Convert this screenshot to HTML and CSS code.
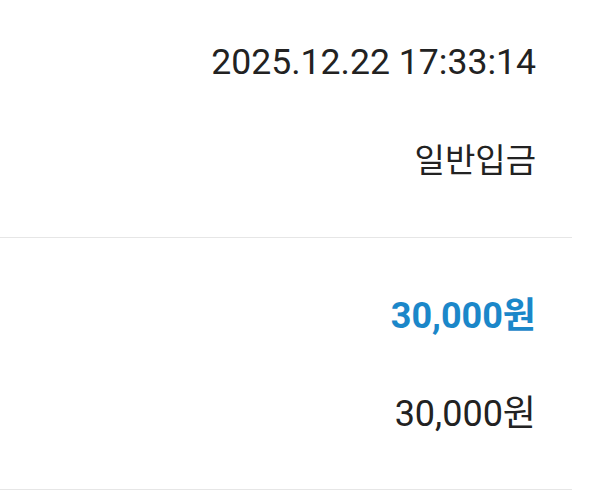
FILE: index.html
```html
<!DOCTYPE html>
<html lang="ko">
<head>
<meta charset="utf-8">
<link rel="stylesheet" href="styles.css">
</head>
<body>
<div class="page">
  <section class="group first">
    <div class="row date">2025.12.22 17:33:14</div>
    <div class="row"><span class="ko">일반입금</span></div>
  </section>
  <section class="group last">
    <div class="row amount">30,000원</div>
    <div class="row">30,000원</div>
  </section>
</div>
</body>
</html>
```
FILE: styles.css
```css
html, body {
  margin: 0;
  padding: 0;
  background: #ffffff;
}
.page {
  width: 572px;
  font-family: Roboto, "Noto Sans CJK KR", sans-serif;
  color: #222222;
}
.group {
  padding: 29px 36px 28px 0;
  border-bottom: 1px solid #e6e6e6;
}
.group.first {
  padding-top: 13px;
}
.group.last {
  padding-bottom: 26px;
}
.row {
  height: 98px;
  line-height: 98px;
  font-size: 36px;
  text-align: right;
}
.date {
  font-size: 35.6px;
}
.ko {
  font-size: 33px;
}
.amount {
  color: #1b87c9;
  font-weight: 700;
}
```
